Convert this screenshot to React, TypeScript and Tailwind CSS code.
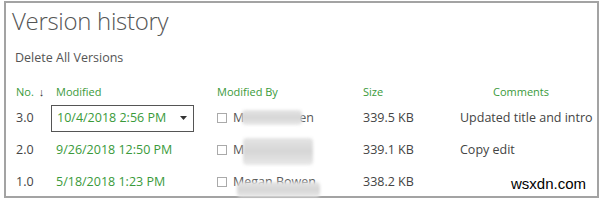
const GREEN = 'text-[#3a9a3a]'

const ROWS = [
  { no: '3.0', date: '10/4/2018 2:56 PM', tail: 'en', size: '339.5 KB', comment: 'Updated title and intro', active: true },
  { no: '2.0', date: '9/26/2018 12:50 PM', tail: 'n', size: '339.1 KB', comment: 'Copy edit', active: false },
  { no: '1.0', date: '5/18/2018 1:23 PM', tail: '', size: '338.2 KB', comment: '', active: false },
]

function Blur({ className }: { className: string }) {
  return (
    <div
      className={`absolute rounded-sm bg-gradient-to-b from-[#e4e4e4] via-[#d6d6d6] to-[#e8e8e8] blur-[1.5px] ${className}`}
    />
  )
}

export default function App() {
  return (
    <div className="h-[200px] w-[600px] overflow-hidden bg-white pl-[4px] pt-[1px] font-['Open_Sans',sans-serif]">
      <div className="relative h-[197px] w-[595px] border-2 border-[#a3a3a3] text-[#444]">
        <div className="pl-[6px] pt-[3px] text-[24px] font-light leading-[30px] tracking-[-0.3px] text-[#555]">
          Version history
        </div>
        <div className="pl-[9px] pt-[14px] text-[12.5px] leading-[16px] text-[#555]">Delete All Versions</div>

        <div className={`mt-[18px] flex h-[16px] items-center text-[11px] ${GREEN}`}>
          <div className="flex w-[50px] items-center pl-[10px]">
            No.
            <span className="ml-[5px] text-[11px] font-bold text-[#333]">↓</span>
          </div>
          <div className="w-[161px]">Modified</div>
          <div className="w-[146px]">Modified By</div>
          <div className="w-[128px]">Size</div>
          <div className="pl-[2px]">Comments</div>
        </div>

        <div className="mt-[2px] flex flex-col text-[12.5px]">
          {ROWS.map((r) => (
            <div key={r.no} className="relative flex h-[32px] items-center">
              <div className="w-[45px] pl-[10px]">{r.no}</div>
              <div className="w-[166px]">
                {r.active ? (
                  <div className={`flex h-[27px] w-[143px] items-center justify-between border border-[#555] pl-[5px] pr-[6px] ${GREEN}`}>
                    {r.date}
                    <svg width="7" height="4" viewBox="0 0 7 4">
                      <path d="M0 0h7L3.5 4z" fill="#333" />
                    </svg>
                  </div>
                ) : (
                  <div className={`pl-[5px] ${GREEN}`}>{r.date}</div>
                )}
              </div>
              <div className="flex w-[146px] items-center">
                <span className="mr-[6px] h-[10px] w-[10px] border border-[#aaa]" />
                {r.tail ? (
                  <>
                    <span className="text-[#555]">M</span>
                    <span className="ml-[55px] text-[#555]">{r.tail}</span>
                  </>
                ) : (
                  <span className="text-[#555]">Megan Bowen</span>
                )}
              </div>
              <div className="w-[97px]">{r.size}</div>
              <div>{r.comment}</div>
            </div>
          ))}
        </div>

        <Blur className="left-[236px] top-[107px] h-[15px] w-[60px]" />
        <Blur className="left-[237px] top-[135px] h-[27px] w-[70px]" />
        <Blur className="left-[231px] top-[179px] h-[15px] w-[83px]" />

        <div className="absolute bottom-[3px] right-[5px] bg-white px-[6px] font-['Liberation_Sans',sans-serif] text-[15px] leading-[18px] text-black">
          wsxdn.com
        </div>
      </div>
    </div>
  )
}
